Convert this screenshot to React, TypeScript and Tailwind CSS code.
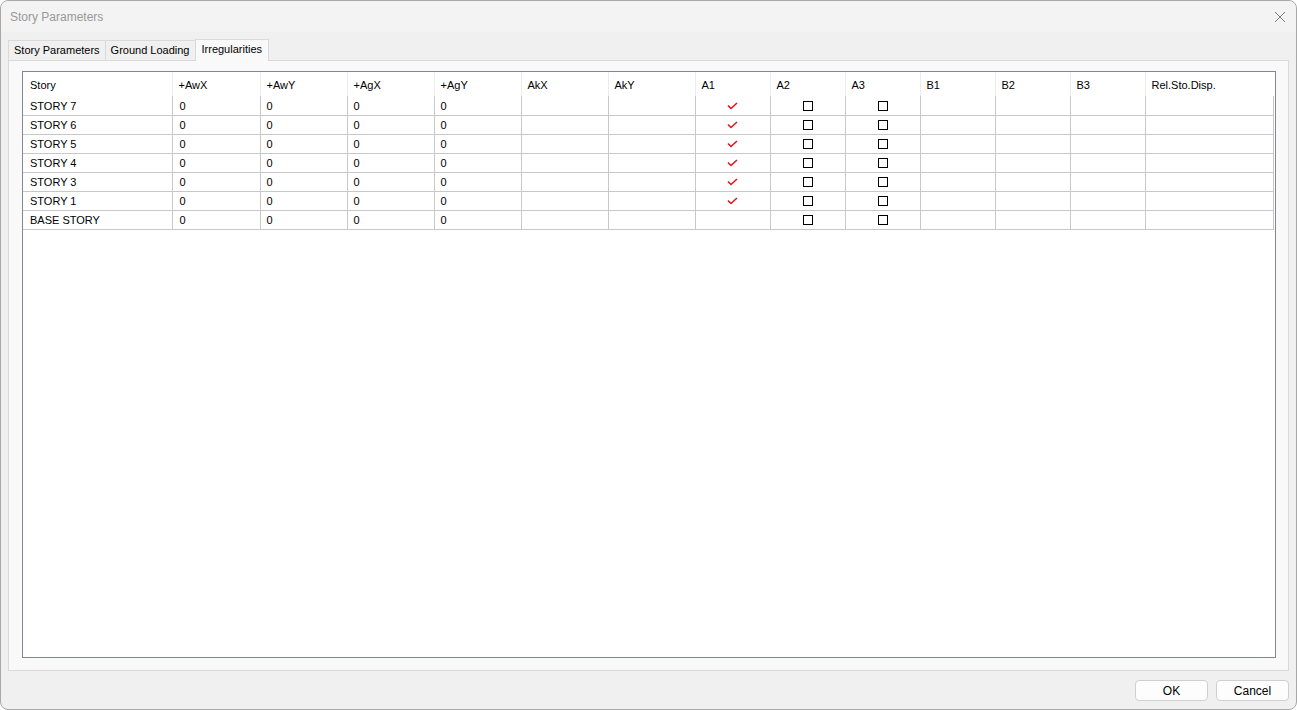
import React from 'react';

type Row = {
  name: string;
  a1: boolean;
};

const rows: Row[] = [
  { name: 'STORY 7', a1: true },
  { name: 'STORY 6', a1: true },
  { name: 'STORY 5', a1: true },
  { name: 'STORY 4', a1: true },
  { name: 'STORY 3', a1: true },
  { name: 'STORY 1', a1: true },
  { name: 'BASE STORY', a1: false },
];

const columns = [
  { label: 'Story', w: 'w-[149px]' },
  { label: '+AwX', w: 'w-[88px]' },
  { label: '+AwY', w: 'w-[87px]' },
  { label: '+AgX', w: 'w-[87px]' },
  { label: '+AgY', w: 'w-[87px]' },
  { label: 'AkX', w: 'w-[87px]' },
  { label: 'AkY', w: 'w-[87px]' },
  { label: 'A1', w: 'w-[75px]' },
  { label: 'A2', w: 'w-[75px]' },
  { label: 'A3', w: 'w-[75px]' },
  { label: 'B1', w: 'w-[75px]' },
  { label: 'B2', w: 'w-[75px]' },
  { label: 'B3', w: 'w-[75px]' },
  { label: 'Rel.Sto.Disp.', w: 'w-[128px]' },
];

function Check() {
  return (
    <svg width="11" height="8" viewBox="0 0 11 8" className="mx-auto block">
      <path d="M1 3.5 L4 6.5 L10 1" fill="none" stroke="#e8101a" strokeWidth="1.6" />
    </svg>
  );
}

function Box() {
  return <div className="mx-auto h-[10px] w-[10px] border border-black bg-white" />;
}

function Tab({ label, active }: { label: string; active?: boolean }) {
  if (active) {
    return (
      <div className="relative z-10 -mb-px flex h-[22px] items-center border border-b-0 border-[#d9d9d9] bg-[#f9f9f9] px-[6px] pb-[3px] text-[11px] text-black">
        {label}
      </div>
    );
  }
  return (
    <div className="mt-[2px] flex h-[20px] items-center border border-r-0 border-b-0 border-[#d9d9d9] bg-[#f0f0f0] px-[5px] text-[11px] text-black">
      {label}
    </div>
  );
}

const cell = 'border-r border-b border-[#c8c8c8] p-0 pt-px';

export default function App() {
  return (
    <div className="h-[710px] w-[1297px] overflow-hidden bg-white font-['Liberation_Sans',Arial,sans-serif]">
      <div className="flex h-[710px] w-[1297px] flex-col rounded-[8px] border border-[#a8a8a8] bg-[#f0f0f0]">
        {/* title bar */}
        <div className="flex h-[31px] shrink-0 items-center justify-between rounded-t-[8px] bg-[#f3f3f3] pl-[9px] pr-[10px]">
          <span className="text-[12px] text-[#999999]">Story Parameters</span>
          <svg width="12" height="12" viewBox="0 0 12 12">
            <path d="M1 1 L11 11 M11 1 L1 11" stroke="#7a7a7a" strokeWidth="1" />
          </svg>
        </div>

        {/* tabs */}
        <div className="mt-[6px] flex h-[22px] items-end pl-[7px]">
          <Tab label="Story Parameters" />
          <Tab label="Ground Loading" />
          <Tab label="Irregularities" active />
        </div>

        {/* tab panel */}
        <div className="mx-[7px] flex h-[611px] flex-col border border-[#d9d9d9] bg-[#f9f9f9] px-[13px] pt-[10px]">
          <div className="h-[587px] w-[1254px] border border-[#828790] bg-white">
            <table className="table-fixed border-collapse text-[11px] text-black">
              <thead>
                <tr className="h-[24px]">
                  {columns.map((c, i) => (
                    <th
                      key={c.label}
                      className={`${c.w} p-0 pt-[2px] text-left align-middle font-normal ${
                        i < columns.length - 1 ? 'border-r border-[#ececec]' : ''
                      } ${i === 0 ? 'pl-[7px]' : 'pl-[6px]'}`}
                    >
                      {c.label}
                    </th>
                  ))}
                </tr>
              </thead>
              <tbody>
                {rows.map((r) => (
                  <tr key={r.name} className="h-[19px]">
                    <td className={`${cell} pl-[7px]`}>{r.name}</td>
                    <td className={`${cell} pl-[7px]`}>0</td>
                    <td className={`${cell} pl-[6px]`}>0</td>
                    <td className={`${cell} pl-[6px]`}>0</td>
                    <td className={`${cell} pl-[6px]`}>0</td>
                    <td className={cell} />
                    <td className={cell} />
                    <td className={cell}>{r.a1 ? <Check /> : null}</td>
                    <td className={cell}>
                      <Box />
                    </td>
                    <td className={cell}>
                      <Box />
                    </td>
                    <td className={cell} />
                    <td className={cell} />
                    <td className={cell} />
                    <td className={cell} />
                  </tr>
                ))}
              </tbody>
            </table>
          </div>
        </div>

        {/* buttons */}
        <div className="flex justify-end gap-[8px] pr-[7px] pt-[9px]">
          <button className="h-[21px] w-[73px] rounded-[4px] border border-[#d0d0d0] bg-[#fdfdfd] text-[12px] text-black">
            OK
          </button>
          <button className="h-[21px] w-[73px] rounded-[4px] border border-[#d0d0d0] bg-[#fdfdfd] text-[12px] text-black">
            Cancel
          </button>
        </div>
      </div>
    </div>
  );
}
